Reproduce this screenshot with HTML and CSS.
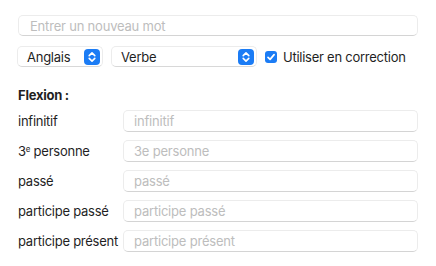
FILE: index.html
```html
<!DOCTYPE html>
<html lang="fr">

<head>
    <meta charset="UTF-8" />
    <title>Nouveau mot</title>
    <link rel="stylesheet" href="styles.css">
</head>

<body>
    <div class="panel">
        <input class="field word" type="text" placeholder="Entrer un nouveau mot">

        <div class="options">
            <div class="popup lang">
                <span>Anglais</span>
                <span class="stepper">
                    <svg width="16" height="16" viewBox="0 0 16 16">
                        <rect width="16" height="16" rx="4" fill="#1b7cf5" />
                        <path d="M5.2 6.6 L8 3.9 L10.8 6.6 M5.2 9.4 L8 12.1 L10.8 9.4" fill="none" stroke="#fff" stroke-width="1.6" stroke-linecap="round" stroke-linejoin="round" />
                    </svg>
                </span>
            </div>
            <div class="popup kind">
                <span>Verbe</span>
                <span class="stepper">
                    <svg width="16" height="16" viewBox="0 0 16 16">
                        <rect width="16" height="16" rx="4" fill="#1b7cf5" />
                        <path d="M5.2 6.6 L8 3.9 L10.8 6.6 M5.2 9.4 L8 12.1 L10.8 9.4" fill="none" stroke="#fff" stroke-width="1.6" stroke-linecap="round" stroke-linejoin="round" />
                    </svg>
                </span>
            </div>
            <label class="check">
                <span class="box">
                    <svg width="12" height="12" viewBox="0 0 12 12">
                        <rect width="12" height="12" rx="3" fill="#1b7cf5" />
                        <path d="M3 6.3 L5.1 8.4 L9.1 3.6" fill="none" stroke="#fff" stroke-width="1.7" stroke-linecap="round" stroke-linejoin="round" />
                    </svg>
                </span>
                Utiliser en correction
            </label>
        </div>

        <h3>Flexion :</h3>

        <div class="forms">
            <label>infinitif</label>
            <input class="field" type="text" placeholder="infinitif">
            <label>3<sup>e</sup> personne</label>
            <input class="field" type="text" placeholder="3e personne">
            <label>passé</label>
            <input class="field" type="text" placeholder="passé">
            <label>participe passé</label>
            <input class="field" type="text" placeholder="participe passé">
            <label>participe présent</label>
            <input class="field" type="text" placeholder="participe présent">
        </div>
    </div>
</body>

</html>
```

FILE: styles.css
```css
body {
    margin: 0;
    background-color: #ffffff;
    font-family: Inter, 'Liberation Sans', sans-serif;
    font-size: 13px;
    letter-spacing: -0.25px;
    color: #1f1f1f;
}

.panel {
    padding: 15px 18px 0 18px;
}

.field {
    display: block;
    box-sizing: border-box;
    height: 22px;
    width: 100%;
    margin: 0;
    padding: 0 10px;
    border: 1px solid #ececec;
    border-bottom-color: #d4d4d4;
    border-radius: 5px;
    background: #ffffff;
    font-family: inherit;
    font-size: 13px;
    letter-spacing: -0.2px;
    color: #1f1f1f;
    outline: none;
}

.field::placeholder {
    color: #bdbdbd;
}

.word {
    height: 21px;
    padding-left: 11px;
}

.options {
    display: flex;
    align-items: center;
    margin-top: 10px;
    margin-left: -1px;
}

.popup {
    display: flex;
    align-items: center;
    justify-content: space-between;
    box-sizing: border-box;
    height: 21px;
    padding: 0 2px 0 9px;
    border: 1px solid #ececec;
    border-bottom-color: #d8d8d8;
    border-radius: 5px;
    background: #ffffff;
}

.lang {
    width: 86px;
}

.kind {
    width: 146px;
    margin-left: 8px;
}

.stepper svg {
    display: block;
}

.check {
    display: flex;
    align-items: center;
    margin-left: 8px;
}

.box {
    margin-right: 6px;
}

.box svg {
    display: block;
}

h3 {
    margin: 20px 0 0 0;
    font-size: 13px;
    font-weight: 700;
    line-height: 16px;
}

.forms {
    display: grid;
    grid-template-columns: 105px 1fr;
    row-gap: 8px;
    align-items: center;
    margin-top: 7px;
}

sup {
    font-size: 8px;
    vertical-align: 4px;
    line-height: 0;
}
```
